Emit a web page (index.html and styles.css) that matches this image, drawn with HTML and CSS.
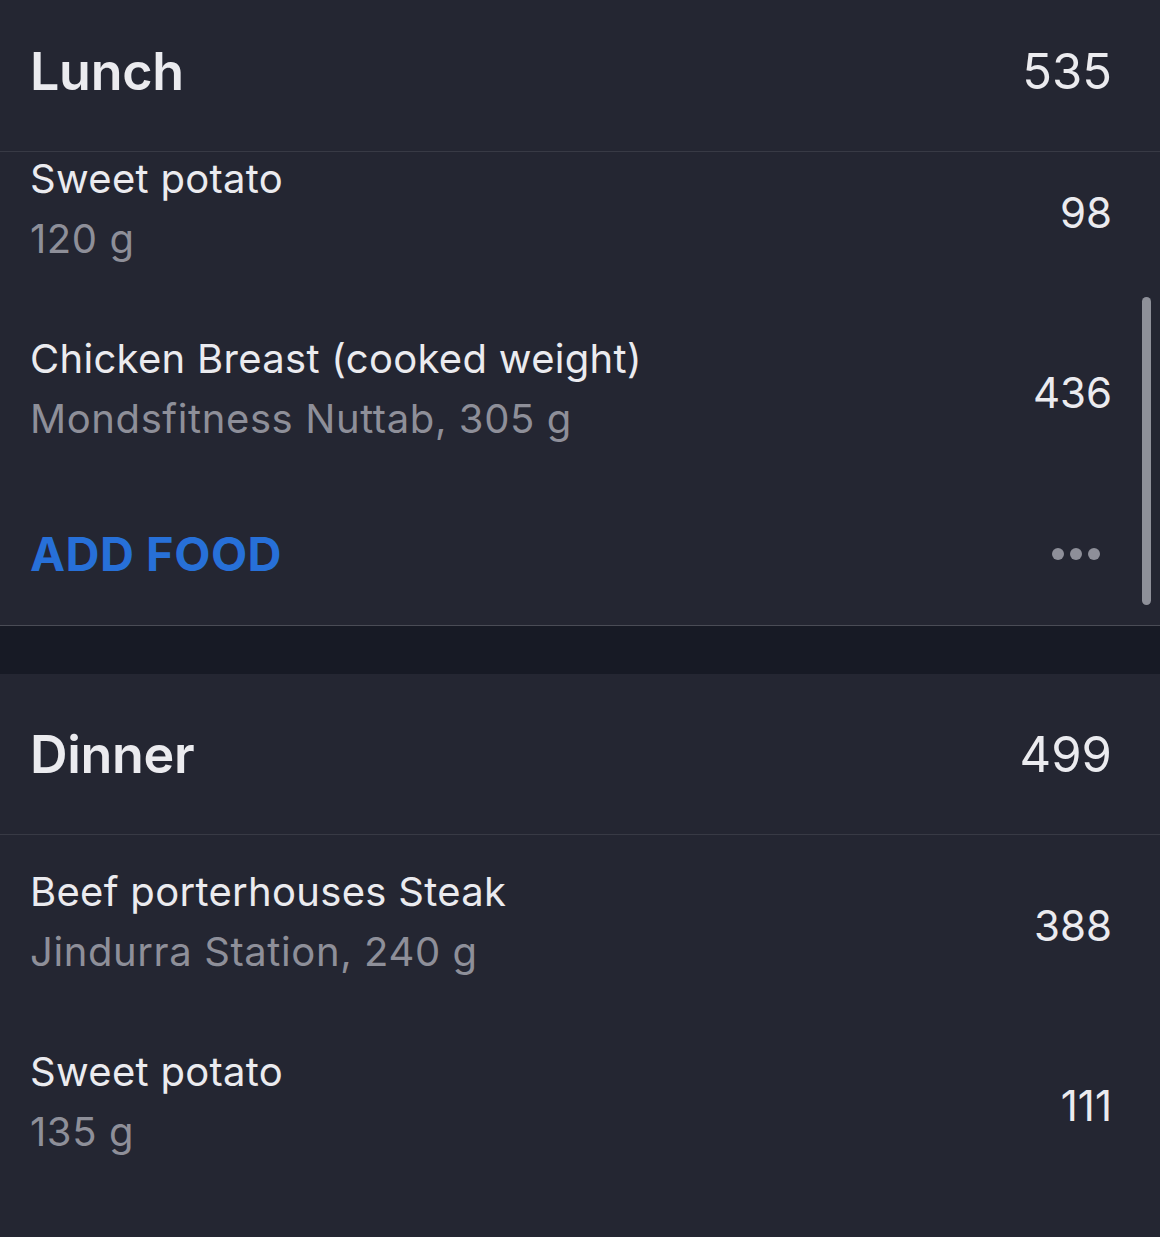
FILE: index.html
```html
<!DOCTYPE html>
<html>
<head>
<meta charset="UTF-8" />
<link rel="stylesheet" href="styles.css">
</head>
<body>
<div class="diary">

  <div class="meal meal-first">
    <div class="meal-head">
      <span class="meal-name">Lunch</span>
      <span class="meal-total">535</span>
    </div>
    <div class="list list-scrolled">
      <div class="row">
        <div class="food">
          <div class="food-name">Sweet potato</div>
          <div class="food-sub">120 g</div>
        </div>
        <div class="kcal">98</div>
      </div>
      <div class="row">
        <div class="food">
          <div class="food-name">Chicken Breast (cooked weight)</div>
          <div class="food-sub">Mondsfitness Nuttab, 305 g</div>
        </div>
        <div class="kcal">436</div>
      </div>
      <div class="actions">
        <span class="add">ADD FOOD</span>
        <span class="more"><i></i><i></i><i></i></span>
      </div>
    </div>
    <div class="scroller"></div>
  </div>

  <div class="gap"></div>

  <div class="meal">
    <div class="meal-head">
      <span class="meal-name">Dinner</span>
      <span class="meal-total">499</span>
    </div>
    <div class="list">
      <div class="row">
        <div class="food">
          <div class="food-name">Beef porterhouses Steak</div>
          <div class="food-sub">Jindurra Station, 240 g</div>
        </div>
        <div class="kcal">388</div>
      </div>
      <div class="row">
        <div class="food">
          <div class="food-name">Sweet potato</div>
          <div class="food-sub">135 g</div>
        </div>
        <div class="kcal">111</div>
      </div>
    </div>
  </div>

</div>
</body>
</html>
```

FILE: styles.css
```css
html, body {
	margin:0;
	padding:0;
	background-color:#242632;
}

body {
	color:#ebebef;
	font-family:Inter, "Noto Sans", sans-serif;
	overflow:hidden;
}

.diary
{
	height:1237px;
	overflow:hidden;
}

.meal
{
	position:relative;
	background-color:#242632;
}

.meal-first
{
	margin-top:-9px;
	border-bottom:1px solid #4a4c56;
}

.meal-head
{
	position:relative;
	z-index:1;
	height:160px;
	display:flex;
	align-items:center;
	justify-content:space-between;
	padding:0 48px 0 30px;
	background-color:#242632;
	border-bottom:1px solid #383a45;
}

.meal-name
{
	font-size:52px;
	font-weight:600;
	letter-spacing:-0.3px;
}

.meal-total
{
	font-size:49px;
	font-weight:400;
}

.list-scrolled
{
	margin-top:-30px;
}

.row
{
	height:180px;
	display:flex;
	align-items:center;
	justify-content:space-between;
	padding:0 48px 0 30px;
}

.food
{
	padding-bottom:6px;
}

.food-name
{
	font-size:40px;
	line-height:60px;
	letter-spacing:0.3px;
}

.food-sub
{
	font-size:40px;
	line-height:60px;
	letter-spacing:0.6px;
	color:#8e8f99;
}

.kcal
{
	font-size:42px;
}

.actions
{
	height:143px;
	display:flex;
	align-items:center;
	justify-content:space-between;
	padding:0 60px 0 30px;
}

.add
{
	color:#2770d8;
	font-size:47px;
	font-weight:700;
	letter-spacing:0.5px;
}

.more
{
	display:flex;
	gap:6px;
}

.more i
{
	width:12px;
	height:12px;
	border-radius:50%;
	background-color:#8e8f99;
}

/* scroll indicator over the list */
.scroller
{
	position:absolute;
	right:9px;
	top:306px;
	width:9px;
	height:308px;
	border-radius:5px;
	background-color:#8e9099;
}

.gap
{
	height:48px;
	background-color:#171a25;
}
```
